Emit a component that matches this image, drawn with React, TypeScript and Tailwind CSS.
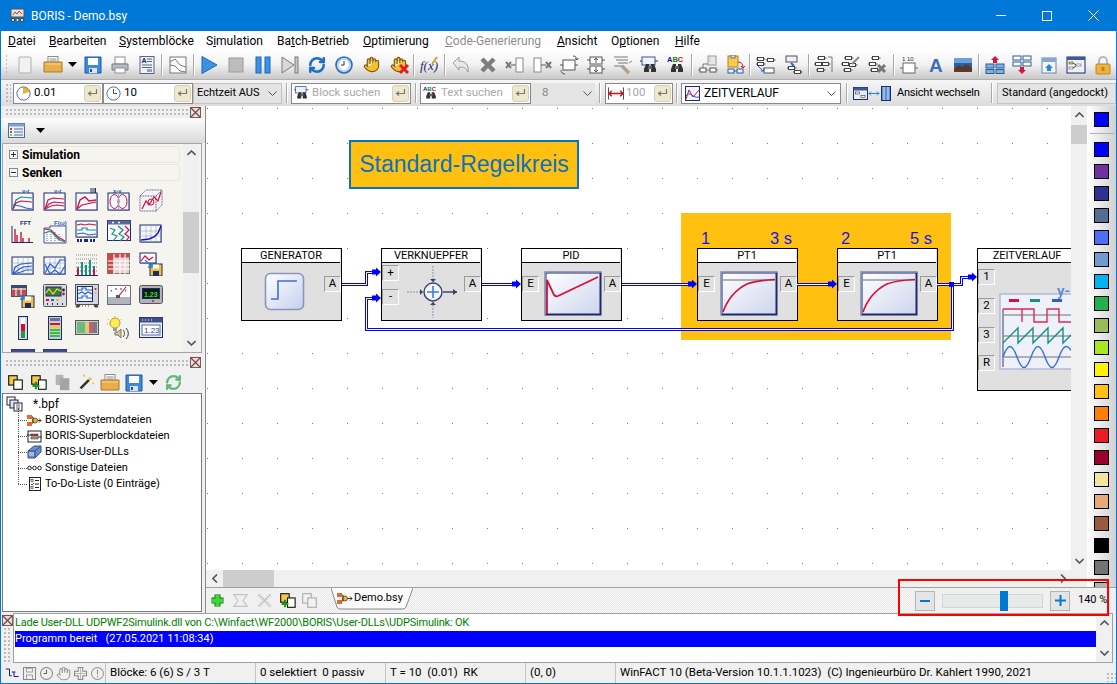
import React from "react";
import { Hand, RefreshCw } from "lucide-react";

const N = "#1c2a6e";
const R = "#d0103a";
const T = "#1a8f86";
const B = "#2a5fd0";

const Ic = ({ s = 20, children }: { s?: number; children: React.ReactNode }) => (
  <svg width={s} height={s} viewBox="0 0 20 20" className="shrink-0">
    {children}
  </svg>
);

const Btn = ({ w = "w-[27px]", children }: { w?: string; children?: React.ReactNode }) => (
  <div className={`${w} h-full flex items-center justify-center shrink-0`}>{children}</div>
);

const Sep = () => (
  <div className="w-[4.2px] h-full flex items-center justify-center shrink-0">
    <div className="w-[2px] h-[22px] shrink-0 border-l border-[#a9a9a9] border-r-white border-r" />
  </div>
);

const Drop = () => (
  <svg width="9" height="5" viewBox="0 0 9 5" className="shrink-0">
    <path d="M0 0h9L4.5 5z" fill="#000" />
  </svg>
);

const Folder = () => (
  <Ic>
    <rect x="5" y="1.5" width="10" height="7" fill="#fff" stroke="#8a8a8a" />
    <path d="M6.5 4h7M6.5 6h7" stroke="#8a8a8a" />
    <path d="M1 7h18v10H1z" fill="#e7ae4c" stroke="#a9782a" />
    <path d="M2 9h16" stroke="#f6d693" />
  </Ic>
);

const Floppy = () => (
  <Ic>
    <path d="M2 2h16v16H2z" fill="#3f88dc" stroke="#1d55a6" />
    <rect x="5" y="3" width="10" height="7" fill="#fff" />
    <rect x="6" y="13" width="8" height="5" fill="#d8e4f4" />
    <rect x="7" y="14" width="2" height="3" fill="#1d55a6" />
  </Ic>
);

const Printer = () => (
  <Ic>
    <rect x="5" y="2" width="10" height="7" fill="#fff" stroke="#8b8f96" />
    <path d="M2 9h16v6H2z" fill="#b9bcc2" stroke="#777b83" />
    <rect x="5" y="13" width="10" height="5" fill="#fff" stroke="#8b8f96" />
  </Ic>
);

const Binoc = ({ abc, s = 20 }: { abc?: boolean; s?: number }) => (
  <Ic s={s}>
    {abc ? (
      <text x="0" y="7" fontSize="7.5" fontWeight="700" fontFamily="Liberation Sans">
        <tspan fill="#1010c0">A</tspan>
        <tspan fill="#118811">B</tspan>
        <tspan fill="#c01010">C</tspan>
      </text>
    ) : (
      <>
        <rect x="2" y="2" width="13" height="8" fill="#eef3fa" stroke="#3a5a9a" />
        <path d="M0 6h2M15 6h3" stroke="#333" />
      </>
    )}
    <path d="M6 9h3v8H4v-3zM11 9h3l2 5v3h-5z" fill="#333" />
    <rect x="8" y="11" width="4" height="3" fill="#666" />
  </Ic>
);

const Blockset = ({ x = 0, y = 0, c = "#fff" }: { x?: number; y?: number; c?: string }) => (
  <g transform={`translate(${x} ${y})`}>
    <rect x="1.5" y="0.5" width="6" height="3" fill={c} stroke="#444" />
    <path d="M0 2h1.5M7.5 2h2" stroke="#444" />
  </g>
);

const Enter = () => (
  <div className="w-[17px] h-[17px] rounded-[3px] bg-[#efe8d0] border border-[#d8d0b4] flex items-center justify-center shrink-0">
    <svg width="11" height="9" viewBox="0 0 11 9">
      <path d="M9.5 0v4.5H2M4 2.5 1.5 4.5 4 6.5" fill="none" stroke="#7a7a6a" strokeWidth="1.2" />
    </svg>
  </div>
);

const Chev = () => (
  <svg width="9" height="5" viewBox="0 0 9 5" className="shrink-0">
    <path d="M.5.5l4 4 4-4" fill="none" stroke="#555" />
  </svg>
);

const Clock = ({ pie }: { pie?: boolean }) => (
  <svg width="15" height="15" viewBox="0 0 17 17" className="shrink-0">
    <circle cx="8.5" cy="8.5" r="7.5" fill="#fff" stroke="#3d5a98" />
    {pie ? (
      <path d="M8.5 8.5V1.5a7 7 0 0 1 6.5 4.5z" fill="#f5b816" stroke="#a9780a" strokeWidth=".5" />
    ) : (
      <path d="M8.5 3.5v5h4" fill="none" stroke="#3a3a3a" />
    )}
  </svg>
);

const Vsep = ({ w }: { w: string }) => (
  <div className={`${w} h-full flex items-center justify-center shrink-0`}>
    <div className="w-[2px] h-[20px] border-l border-[#a9a9a9] border-r border-r-white" />
  </div>
);

const Grip = ({ className = "" }: { className?: string }) => (
  <div className={`bg-[radial-gradient(circle,#bcbcbc_1px,transparent_1.2px)] bg-[length:4px_4px] ${className}`} />
);

const CloseBox = () => (
  <svg width="11" height="11" viewBox="0 0 11 11" className="shrink-0">
    <rect x=".5" y=".5" width="10" height="10" fill="#eadfdb" stroke="#7a5a5a" />
    <path d="M1 1l9 9M10 1l-9 9" stroke="#6a4a4a" strokeWidth="1.2" />
    <path d="M.5.5h10" stroke="#b33" />
  </svg>
);

const TitleBar = () => (
  <div className="h-[31px] bg-[#0078d7] flex items-center shrink-0">
    <svg width="15" height="15" viewBox="0 0 15 15" className="ml-[9px]">
      <rect x="1" y="1" width="13" height="8" fill="#e8e4d8" stroke="#555" />
      <path d="M3 7l2-3 2 2 2-3 3 3" fill="none" stroke="#c0392b" />
      <circle cx="3" cy="12" r="1.6" fill="#eee" stroke="#444" />
      <circle cx="7.5" cy="12" r="1.6" fill="#eee" stroke="#444" />
      <circle cx="12" cy="12" r="1.6" fill="#eee" stroke="#444" />
    </svg>
    <span className="ml-[6px] text-white text-[12px]">BORIS - Demo.bsy</span>
    <div className="ml-auto flex h-full">
      <div className="w-[46px] flex items-center justify-center">
        <div className="w-[10px] h-px bg-white" />
      </div>
      <div className="w-[46px] flex items-center justify-center">
        <div className="w-[10px] h-[10px] border border-white" />
      </div>
      <div className="w-[46px] flex items-center justify-center">
        <svg width="11" height="11" viewBox="0 0 11 11">
          <path d="M.5.5l10 10M10.5.5l-10 10" stroke="#fff" />
        </svg>
      </div>
    </div>
  </div>
);

const MenuBar = () => {
  const items: [string, string, string, string, boolean?][] = [
    ["", "D", "atei", "w-[41px]"],
    ["", "B", "earbeiten", "w-[70px]"],
    ["", "S", "ystemblöcke", "w-[87px]"],
    ["S", "i", "mulation", "w-[71px]"],
    ["Ba", "t", "ch-Betrieb", "w-[86px]"],
    ["", "O", "ptimierung", "w-[82px]"],
    ["", "C", "ode-Generierung", "w-[112px]", true],
    ["", "A", "nsicht", "w-[54px]"],
    ["O", "p", "tionen", "w-[64px]"],
    ["", "H", "ilfe", "w-[40px]"],
  ];
  return (
    <div className="h-[19px] bg-white flex items-center pl-[7px] text-[12px] shrink-0">
      {items.map(([a, u, b, w, off]) => (
        <div key={u + b} className={`${w} ${off ? "text-[#8c8c8c]" : "text-black"} whitespace-nowrap`}>
          {a}
          <u>{u}</u>
          {b}
        </div>
      ))}
    </div>
  );
};

const Toolbar1 = () => (
  <div className="h-[30px] bg-gradient-to-b from-[#fefefe] via-[#f2f2f2] to-[#c9c9c9] flex items-center pl-[4px] shrink-0 border-b border-[#b0b0b0]">
    <Grip className="w-[6px] h-[22px] mr-[4px]" />
    <Btn w="w-[28px]">
      <Ic>
        <rect x="4" y="2" width="12" height="16" rx="1" fill="#f2f2f2" stroke="#b0b0b0" />
      </Ic>
    </Btn>
    <Btn><Folder /></Btn>
    <Btn w="w-[13px]"><Drop /></Btn>
    <Btn><Floppy /></Btn>
    <Btn><Printer /></Btn>
    <Btn>
      <Ic>
        <rect x="3" y="1.5" width="14" height="17" fill="#eef1f6" stroke="#5a6678" />
        <text x="4.5" y="8" fontSize="7" fontWeight="700" fontFamily="Liberation Sans" fill={N}>A</text>
        <path d="M10 4h5M10 6.5h5M5 10h10M5 12.5h10" stroke="#5a6678" />
        <rect x="10" y="14" width="5" height="3" fill="#8aa0c0" />
      </Ic>
    </Btn>
    <Sep />
    <Btn>
      <Ic>
        <rect x="2" y="2" width="16" height="16" fill="#fbfbfb" stroke="#7a7a7a" />
        <path d="M2 7l5-3 5 6 6 2M2 10l5 1 5 5 6 1" fill="none" stroke="#7a7a7a" />
      </Ic>
    </Btn>
    <Sep />
    <Btn>
      <Ic><path d="M3 1.5 18 10 3 18.5z" fill="#3d91e4" stroke="#1b66b8" /></Ic>
    </Btn>
    <Btn>
      <Ic><rect x="3" y="3" width="14" height="14" fill="#bdbdbd" stroke="#9a9a9a" /></Ic>
    </Btn>
    <Btn>
      <Ic>
        <rect x="3" y="2" width="5" height="16" fill="#3d91e4" stroke="#1b66b8" />
        <rect x="12" y="2" width="5" height="16" fill="#3d91e4" stroke="#1b66b8" />
      </Ic>
    </Btn>
    <Btn>
      <Ic>
        <path d="M2 2 14 10 2 18z" fill="#d8d8d8" stroke="#7a7a7a" />
        <rect x="15" y="2" width="3" height="16" fill="#c8c8c8" stroke="#7a7a7a" />
      </Ic>
    </Btn>
    <Btn><RefreshCw size={18} strokeWidth={3.4} color="#1d6fc9" /></Btn>
    <Btn>
      <Ic>
        <circle cx="10" cy="10" r="8" fill="#bcd6f2" stroke="#2c6db5" strokeWidth="1.6" />
        <circle cx="10" cy="10" r="5" fill="#fff" />
        <path d="M10 6v4H7" fill="none" stroke="#333" />
      </Ic>
    </Btn>
    <Btn><Hand size={17} fill="#f5c02a" color="#7a5a10" strokeWidth={1.6} /></Btn>
    <Btn>
      <div className="relative">
        <Hand size={17} fill="#f5c02a" color="#7a5a10" strokeWidth={1.6} />
        <svg width="12" height="12" viewBox="0 0 12 12" className="absolute right-[-3px] bottom-[-2px]">
          <path d="M2 2l8 8M10 2l-8 8" stroke="#e31b1b" strokeWidth="3" />
        </svg>
      </div>
    </Btn>
    <Sep />
    <Btn>
      <Ic>
        <text x="1" y="15" fontSize="13" fontStyle="italic" fontFamily="Liberation Serif" fill={N}>f(x)</text>
        <path d="M13 9l5-7" stroke="#c9a227" strokeWidth="2" />
      </Ic>
    </Btn>
    <Sep />
    <Btn>
      <Ic>
        <path d="M2 8l6-6v4c6 0 10 3 9 11-2-4-4-5-9-5v3z" fill="#e8e8e8" stroke="#9a9a9a" />
      </Ic>
    </Btn>
    <Btn>
      <Ic><path d="M4 4l12 12M16 4 4 16" stroke="#7d7d7d" strokeWidth="4.4" /></Ic>
    </Btn>
    <Btn>
      <Ic>
        <path d="M1 7l5 6M6 7l-5 6" stroke="#777" strokeWidth="2" />
        <path d="M6 10h5" stroke="#555" />
        <rect x="11" y="3" width="7" height="14" fill="#fff" stroke="#888" />
      </Ic>
    </Btn>
    <Btn>
      <Ic>
        <rect x="2" y="3" width="7" height="14" fill="#fff" stroke="#888" />
        <path d="M9 10h5" stroke="#555" />
        <path d="M14 7l5 6M19 7l-5 6" stroke="#777" strokeWidth="2" />
      </Ic>
    </Btn>
    <Btn>
      <Ic>
        <rect x="4" y="5" width="12" height="10" fill="#fff" stroke="#555" />
        <path d="M14 1c3 0 4 2 4 4M6 19c-3 0-4-2-4-4M1 10h3M16 10h3" fill="none" stroke="#555" />
        <path d="M18 5l-2-2M18 5l1.500-2" stroke="#555" />
      </Ic>
    </Btn>
    <Btn>
      <Ic>
        <rect x="4" y="2" width="12" height="7" fill="#fff" stroke="#555" />
        <rect x="4" y="11" width="12" height="7" fill="#fff" stroke="#555" />
        <path d="M10 3v5M8 5l2-2 2 2M10 12v5M8 15l2 2 2-2M1 5h3M16 5h3M1 14h3M16 14h3" fill="none" stroke="#555" />
      </Ic>
    </Btn>
    <Btn>
      <Ic>
        <path d="M1 2h14M3 5h12M5 8h10M1 11h9" stroke="#777" />
        <path d="M9 11l7 7" stroke="#b0a08a" strokeWidth="3.4" />
        <path d="M16 8l3-2" stroke="#888" />
      </Ic>
    </Btn>
    <Btn><Binoc /></Btn>
    <Btn><Binoc abc /></Btn>
    <Sep />
    <Btn>
      <Ic>
        <rect x="10" y="1" width="8" height="9" fill="#e8e8e8" stroke="#999" />
        <path d="M9 4l3-2v5" fill="none" stroke="#c8c8c8" />
        <rect x="2" y="13" width="6" height="4" fill="#fff" stroke="#555" />
        <rect x="12" y="13" width="6" height="4" fill="#fff" stroke="#555" />
        <path d="M0 15h2M8 15h4M18 15h2M5 13V9h5" fill="none" stroke="#777" />
      </Ic>
    </Btn>
    <Btn>
      <Ic>
        <rect x="3" y="1" width="10" height="11" fill="#f5cc4f" stroke="#a9842a" />
        <rect x="6" y="0" width="4" height="3" fill="#ddd" stroke="#777" />
        <path d="M13 7c3 0 5 2 5 5M16 11l2 2 2-2" fill="none" stroke="#c8102e" />
        <rect x="3" y="14" width="6" height="4" fill="#eaf2fb" stroke="#2c5c9a" />
        <rect x="12" y="14" width="6" height="4" fill="#eaf2fb" stroke="#2c5c9a" />
        <path d="M9 16h3" stroke="#2c5c9a" />
      </Ic>
    </Btn>
    <Sep />
    <Btn>
      <Ic>
        <Blockset x={0} y={2} />
        <Blockset x={0} y={7} />
        <Blockset x={10} y={3} />
        <rect x="8" y="13" width="10" height="5" fill="#fff" stroke="#555" />
        <path d="M2 11l6 6M5 16h3v-3" fill="none" stroke="#2a66c8" />
      </Ic>
    </Btn>
    <Btn>
      <Ic>
        <rect x="3" y="1" width="11" height="6" fill="#eef1f6" stroke="#555" />
        <path d="M8 8l3 3" stroke="#2a66c8" strokeWidth="2" />
        <Blockset x={4} y={11} />
        <Blockset x={10} y={15} />
      </Ic>
    </Btn>
    <Sep />
    <Btn>
      <Ic>
        <Blockset x={3} y={1} />
        <Blockset x={0} y={7} />
        <Blockset x={7} y={7} />
        <Blockset x={2} y={13} />
        <path d="M14 2h4v15" fill="none" stroke="#777" />
      </Ic>
    </Btn>
    <Btn>
      <Ic>
        <Blockset x={3} y={1} />
        <Blockset x={0} y={7} />
        <Blockset x={7} y={8} />
        <Blockset x={2} y={13} />
        <path d="M11 9l7-7" stroke="#8a8a8a" strokeWidth="2" />
      </Ic>
    </Btn>
    <Btn>
      <Ic>
        <Blockset x={3} y={1} />
        <Blockset x={0} y={7} />
        <Blockset x={2} y={13} />
        <path d="M10 10l7 7M17 10l-7 7" stroke="#777" strokeWidth="3" />
      </Ic>
    </Btn>
    <Sep />
    <Btn>
      <Ic>
        <text x="3" y="6" fontSize="6" fontFamily="Liberation Sans" fill="#333">1 10</text>
        <rect x="4" y="8" width="12" height="10" fill="#fff" stroke="#666" />
        <path d="M1 13h3M16 13h3" stroke="#666" />
      </Ic>
    </Btn>
    <Btn>
      <Ic><text x="3" y="17" fontSize="19" fontWeight="700" fontFamily="Liberation Sans" fill="#3c6fb5">A</text></Ic>
    </Btn>
    <Btn>
      <Ic>
        <rect x="1" y="3" width="18" height="14" fill="#2a5ea8" />
        <rect x="1" y="3" width="18" height="5" fill="#6aa0da" />
        <path d="M1 14l5-4 3 2 4-3 6 4v4H1z" fill="#5a3a26" />
      </Ic>
    </Btn>
    <Sep />
    <Btn>
      <Ic>
        <rect x="1" y="9" width="8" height="4" fill="#7fb0e0" stroke="#2c5c9a" />
        <rect x="11" y="9" width="8" height="4" fill="#7fb0e0" stroke="#2c5c9a" />
        <rect x="1" y="14.500" width="8" height="4" fill="#7fb0e0" stroke="#2c5c9a" />
        <rect x="11" y="14.500" width="8" height="4" fill="#7fb0e0" stroke="#2c5c9a" />
        <path d="M10 1l4 4h-2v3H8V5H6z" fill="#d8173a" />
      </Ic>
    </Btn>
    <Btn>
      <Ic>
        <rect x="1" y="1" width="8" height="4" fill="#fff" stroke="#2c5c9a" />
        <rect x="11" y="1" width="8" height="4" fill="#fff" stroke="#2c5c9a" />
        <rect x="1" y="7" width="8" height="4" fill="#fff" stroke="#2c5c9a" />
        <rect x="11" y="7" width="8" height="4" fill="#fff" stroke="#2c5c9a" />
        <path d="M10 19l4-4h-2v-3H8v3H6z" fill="#d8173a" />
      </Ic>
    </Btn>
    <Btn>
      <Ic>
        <rect x="3" y="3" width="14" height="15" fill="#f4f7fb" stroke="#6a86aa" />
        <rect x="3" y="3" width="14" height="4" fill="#8aa6cc" />
        <path d="M10 9l4 4h-2v3H8v-3H6z" fill="#2a86d8" />
      </Ic>
    </Btn>
    <Btn>
      <Ic>
        <rect x="1" y="2" width="18" height="16" fill="#eef1f6" stroke={N} />
        <rect x="1" y="2" width="18" height="3" fill="#3d5a98" />
        <g transform="translate(3 7)"><rect width="4" height="2" fill="#f5c02a" stroke="#444" strokeWidth=".5" /></g>
        <g transform="translate(3 12)"><rect width="4" height="2" fill="#fff" stroke="#444" strokeWidth=".5" /></g>
        <g transform="translate(10 9)"><rect width="5" height="2" fill="#fff" stroke="#444" strokeWidth=".5" /></g>
        <path d="M7 8l3 2M7 13l3-2" stroke="#444" />
      </Ic>
    </Btn>
    <Btn>
      <Ic>
        <path d="M6 9V6a4 4 0 0 1 8 0v3" fill="none" stroke="#b8b8b8" strokeWidth="2" />
        <rect x="3" y="9" width="14" height="10" rx="1" fill="#eeb43a" stroke="#b9862a" />
        <rect x="8.500" y="12" width="3" height="4" fill="#b9862a" />
      </Ic>
    </Btn>
  </div>
);

const Field = ({ w, icon, text, dim }: { w: string; icon: React.ReactNode; text: string; dim?: boolean }) => (
  <div className={`${w} h-[21px] bg-white border border-[#8a8a8a] flex items-center pl-[2px] pr-[1px] shrink-0`}>
    <div className="w-[15px] flex items-center shrink-0">{icon}</div>
    <span className={`ml-[3px] text-[11.5px] flex-1 whitespace-nowrap ${dim ? "text-[#a8a8a8]" : "text-black"}`}>{text}</span>
    <Enter />
  </div>
);

const Toolbar2 = () => (
  <div className="h-[26px] bg-gradient-to-b from-[#f6f6f6] to-[#dcdcdc] flex items-center pl-[4px] shrink-0">
    <Grip className="w-[6px] h-[20px] mr-[2px]" />
    <Field w="w-[90px]" icon={<Clock pie />} text="0.01" />
    <Field w="w-[90px]" icon={<Clock />} text="10" />
    <div className="w-[89px] h-[21px] bg-[#e4e4e4] border border-[#c4c4c4] flex items-center pl-[3px] pr-[4px] text-[11px] shrink-0">
      <span className="flex-1 whitespace-nowrap">Echtzeit AUS</span>
      <Chev />
    </div>
    <Vsep w="w-[9px]" />
    <Field w="w-[120px]" icon={<Binoc s={16} />} text="Block suchen" dim />
    <Vsep w="w-[9px]" />
    <Field w="w-[111px]" icon={<Binoc abc s={16} />} text="Text suchen" dim />
    <div className="w-[64px] h-[21px] bg-[#e4e4e4] flex items-center pl-[11px] pr-[3px] text-[11.5px] text-[#888] shrink-0">
      <span className="flex-1">8</span>
      <Chev />
    </div>
    <Vsep w="w-[10px]" />
    <Field
      w="w-[68px]"
      icon={
        <svg width="16" height="13" viewBox="0 0 17 13" className="shrink-0">
          <path d="M.5 0v13M16.500 0v13" stroke="#444" />
          <path d="M1 6.500h15M4 3.500l-3 3 3 3M13 3.500l3 3-3 3" fill="none" stroke="#d0101a" strokeWidth="1.4" />
        </svg>
      }
      text="100"
      dim
    />
    <Vsep w="w-[8px]" />
    <div className="w-[160px] h-[21px] bg-white border border-[#8a8a8a] flex items-center pl-[3px] pr-[4px] text-[12px] shrink-0">
      <svg width="15" height="15" viewBox="0 0 15 15" className="shrink-0">
        <rect x=".5" y=".5" width="14" height="14" fill="#f2f4fb" stroke={N} />
        <path d="M1 13l3-9 4 7 6-7" fill="none" stroke={R} />
        <path d="M1 10c4-6 7 3 13 1" fill="none" stroke={B} />
      </svg>
      <span className="ml-[4px] flex-1">ZEITVERLAUF</span>
      <Chev />
    </div>
    <Vsep w="w-[12px]" />
    <svg width="38" height="15" viewBox="0 0 38 15" className="shrink-0">
      <rect x=".5" y="1.500" width="14" height="12" fill="#e8eef8" stroke={N} />
      <rect x=".5" y="1.500" width="14" height="3" fill="#3d5a98" />
      <rect x="2.500" y="6" width="4" height="2" fill="#fff" stroke="#333" strokeWidth=".6" />
      <rect x="8" y="9.500" width="4" height="2" fill="#fff" stroke="#333" strokeWidth=".6" />
      <path d="M16 7.500h10M18 5.500l-2 2 2 2M24 5.500l2 2-2 2" fill="none" stroke="#2a80e0" />
      <rect x="28.500" y=".5" width="9" height="14" fill="#5a8fd0" stroke={N} />
      <path d="M31 1v13M35 1v13" stroke="#dbe8f8" />
    </svg>
    <span className="ml-[6px] w-[94px] text-[11px] tracking-[-0.2px] whitespace-nowrap shrink-0">Ansicht wechseln</span>
    <div className="w-[2px] h-[20px] border-l border-[#a9a9a9] border-r border-r-white shrink-0" />
    <div className="ml-[4px] flex-1 h-[21px] bg-[#e4e4e4] border border-[#c4c4c4] flex items-center pl-[4px] text-[11px] whitespace-nowrap overflow-hidden">
      Standard (angedockt)
    </div>
  </div>
);

const Fr = ({ x = 1, y = 5, w = 21, h = 17, fill = "#f7f8fe" }: { x?: number; y?: number; w?: number; h?: number; fill?: string }) => (
  <>
    <rect x={x + 1} y={y + 1} width={w} height={h} fill="#b8bccb" />
    <rect x={x} y={y} width={w} height={h} fill={fill} stroke={N} />
  </>
);
const Pl = ({ p, c = R, w = 1.2 }: { p: string; c?: string; w?: number }) => <polyline points={p} fill="none" stroke={c} strokeWidth={w} />;
const Tx = ({ x, y, t, c = B, s = 6 }: { x: number; y: number; t: string; c?: string; s?: number }) => (
  <text x={x} y={y} fontSize={s} fontWeight="700" fontFamily="Liberation Sans" fill={c}>{t}</text>
);
const GridLines = () => <path d="M2 11h20M2 16h20M7 5v17M12 5v17M17 5v17" stroke="#9aa4b4" strokeWidth=".6" />;
const Disk = () => (
  <g>
    <rect x="11" y="12" width="12" height="12" fill="#f2c23c" stroke={N} />
    <rect x="14" y="12.500" width="6" height="4" fill="#fff" />
    <rect x="14" y="19" width="6" height="5" fill={N} />
    <path d="M6 8l7 7M13 11v4H9" fill="none" stroke="#2a80d0" strokeWidth="1.4" />
  </g>
);

const sinks: React.ReactNode[] = [
  <><Tx x={11} y={5} t="y-t" /><Fr /><Pl p="2,21 5,12 10,9 21,10" c={T} /><Pl p="2,21 5,15 10,13 21,14" /><Pl p="2,17 9,18 15,20 21,21" c={B} /></>,
  <><Tx x={11} y={5} t="y-t" /><Fr /><Pl p="2,21 5,12 10,10 21,11" /><Pl p="2,21 6,16 11,14 21,15" /><Pl p="2,21 8,18 14,17 21,18" /></>,
  <><rect x="15" y="0" width="5" height="5" fill="#8895b0" /><path d="M20.500 0v5" stroke="#333" /><Fr /><Pl p="2,21 5,12 10,9 14,13 21,12" w={1.4} /><Pl p="2,21 7,17 21,14" /></>,
  <><Tx x={6} y={5} t="x-y" /><Fr /><ellipse cx="7.500" cy="13.500" rx="4.500" ry="7" fill="none" stroke={R} /><ellipse cx="15.500" cy="13.500" rx="4.500" ry="7" fill="none" stroke={R} /><path d="M11.500 5v17" stroke="#9aa4b4" /></>,
  <><path d="M1 8l6-6h16v15l-6 6H1zM1 8h16v15M17 8l6-6" fill="#f4f4f8" stroke="#5a6278" strokeDasharray="1 .6" /><Pl p="3,21 7,13 10,17 15,9 19,13 22,4" /><circle cx="12" cy="14" r="3" fill="none" stroke={R} /></>,
  <><Tx x={9} y={5} t="FFT" c={N} /><path d="M1 6v17M1 22.500h21" stroke={N} /><path d="M4 22V9M6 22V15M10 22V12M12 22V18M18 22V18" stroke={R} strokeWidth="1.400" /></>,
  <><Tx x={11} y={5} t="F(ω)" /><path d="M1 8h6v-2h16v17H1z" fill="#f7f8fe" stroke={N} strokeWidth=".8" /><path d="M4 12v10M8 12v10M12 12v10M16 14v8" stroke="#777" strokeDasharray="1 1" /><Pl p="1,9 8,10 15,17 22,21" /><Pl p="1,13 8,11 15,19 22,22" c={T} /></>,
  <><Fr y={1} h={16} /><Pl p="2,5 6,4 10,5 14,4 21,5" /><Pl p="2,10 7,10 7,8 12,8 12,10 21,10" c={T} /><Pl p="2,14 8,13 14,15 21,14" c={B} /><path d="M2 19h2v3H2zM5 19h2v3H5zM9 19h4v3H9zM15 19h2v3h-2zM18 19h2v3h-2z" fill={N} /></>,
  <><rect x=".5" y=".5" width="23" height="20" fill="#f7f8fe" stroke={N} /><rect x=".5" y=".5" width="23" height="4" fill="#5a6a98" /><circle cx="6" cy="2.500" r="1" fill="#fff" /><circle cx="12" cy="2.500" r="1" fill="#ffd" /><Pl p="3,8 8,10 5,14 10,16 6,21" c={T} /><Pl p="11,6 16,10 12,14 17,17 13,21" c={T} /><Pl p="18,6 22,10 18,14 22,17 19,21" /></>,
  <><Fr /><GridLines /><Pl p="2,20 10,19 15,17 19,13 22,6" c="#1010c0" w={1.4} /></>,
  <><Fr /><GridLines /><Pl p="2,22 4,15 10,12 21,11" c={B} /><Pl p="2,22 7,18 12,15 21,14" c={B} /><Pl p="2,22 10,20 15,18 21,18" c={B} /></>,
  <><Fr /><GridLines /><Pl p="2,21 7,12 12,16 17,8 22,8" c={B} /><Pl p="2,12 7,22 12,18 17,22 22,14" c={B} /></>,
  <><path d="M1 3h21M1 7h21M1 11h21M1 15h21M1 19h21" stroke="#8a8a8a" strokeDasharray="1 1" /><path d="M3 23V15M7 23V10M11 23V13M15 23V8M19 23V14" stroke={T} strokeWidth="2" /><path d="M3 23V17M19 23V17" stroke={R} strokeWidth="2" /><path d="M0 23.500h23" stroke={N} /></>,
  <><rect x=".5" y="1.500" width="22" height="20" fill="#ead2d2" stroke="#777" /><rect x=".5" y="1.500" width="22" height="4" fill="#c84a4a" /><rect x=".5" y="1.500" width="6" height="20" fill="#c84a4a" /><path d="M1 9h22M1 13h22M1 17h22M7 2v20M13 2v20M18 2v20" stroke="#fff" /></>,
  <><Fr x={1} y={1} w={16} h={10} /><Pl p="2,9 6,4 10,8 14,5" /><Disk /></>,
  <><rect x=".5" y="1.500" width="15" height="11" fill="#c84a4a" stroke="#555" /><path d="M1 5h14M5 2v10M10 2v10" stroke="#fff" /><rect x="0" y="1" width="16" height="3" fill="#3a4878" /><Disk /></>,
  <><rect x=".5" y=".5" width="23" height="22" rx="1" fill="#d8dbe3" stroke="#555" /><rect x="3" y="3" width="15" height="9" fill="#3f7a3a" stroke={N} /><Pl p="3,9 6,5 10,10 14,5 18,7" c="#f2e23c" /><circle cx="20.500" cy="6" r="1.400" fill="#222" /><circle cx="20.500" cy="10" r="1.400" fill={R} /><path d="M3 16h3" stroke={R} strokeWidth="2" /><path d="M8 16h3" stroke={B} strokeWidth="2" /><path d="M13 16h3" stroke="#e8c030" strokeWidth="2" /><path d="M4 20h1M9 20h1M14 20h1M19 20h1" stroke="#333" strokeWidth="2" /></>,
  <><rect x=".5" y=".5" width="23" height="20" fill="#d3d6de" stroke="#555" /><rect x="2.500" y="2.500" width="15" height="15" fill="#f2f5ff" stroke={N} /><Pl p="3,6 7,6 7,4 11,4 11,6 17,6" c={B} /><Pl p="3,10 7,8 10,10 13,8 17,10" c={B} /><Pl p="3,14 7,14 7,12 12,12 12,14 17,14" c={B} /><circle cx="20.500" cy="5" r="1" fill={R} /><circle cx="20.500" cy="9" r="1" fill="#e8c030" /><path d="M2 21l-1 2h3l1-2zM19 21l1 2h3l-1-2zM7 22h1M10 22h1M13 22h1" fill="#444" stroke="#444" /></>,
  <><rect x=".5" y="1.500" width="23" height="19" fill="#fff" stroke="#6a6f7c" /><rect x="1" y="13" width="22" height="7" fill="#b2b5bd" /><path d="M4 6l.7 1.500M9 4v2M14 4v2M19 6l-.7 1.500" stroke="#333" /><path d="M11 13l8-10" stroke={R} strokeWidth="1.200" /><rect x="9" y="11" width="4" height="3" fill="#555" /></>,
  <><rect x=".5" y="1.500" width="23" height="18" rx="2" fill="#b0b3bc" stroke="#555" /><rect x="3.500" y="4.500" width="17" height="10" fill="#101a10" stroke={N} /><text x="5" y="12.500" fontSize="7" fontWeight="700" fontFamily="Liberation Sans" fill="#28e040">1.23</text><circle cx="14" cy="17" r="1" fill={R} /><circle cx="18" cy="17" r="1" fill="#e8c030" /></>,
  <><rect x="7.500" y=".5" width="9" height="23" fill="#d5d7dd" stroke={N} /><rect x="10" y="2" width="4" height="20" fill="#fff" /><rect x="10" y="8" width="4" height="7" fill={R} /><rect x="10" y="15" width="4" height="7" fill="#2a9a40" /></>,
  <><rect x="5.500" y=".5" width="13" height="23" fill="#c8cbd4" stroke={N} /><rect x="7" y="2" width="10" height="3" fill="#6a7488" /><rect x="7" y="7" width="10" height="2" fill={R} /><rect x="7" y="10" width="10" height="2" fill="#e8d030" /><rect x="7" y="13" width="10" height="2" fill="#3ac040" /><rect x="7" y="16" width="10" height="2" fill="#3ac040" /><rect x="7" y="19" width="10" height="2" fill="#3ac040" /></>,
  <><rect x=".5" y="4.500" width="23" height="14" fill="#c8cbd4" stroke="#555" /><path d="M3 6v11M5 6v11M7 6v11M9 6v11" stroke="#30b040" strokeWidth="1.200" /><path d="M11 6v11M13 6v11" stroke="#e8d030" strokeWidth="1.200" /><path d="M15 6v11M17 6v11" stroke={R} strokeWidth="1.200" /><path d="M19 6v11M21 6v11" stroke="#444" strokeWidth="1.200" /></>,
  <><circle cx="8" cy="7" r="5" fill="#f8ec5a" stroke="#c89a10" /><path d="M8 0v1M1 3l1 1M15 3l-1 1M0 8h1" stroke="#e0a010" strokeDasharray="1 .5" /><rect x="6" y="12" width="4" height="3" fill="#999" /><path d="M8 16h3l3-3v9l-3-3H8z" fill="#d8c880" stroke="#777" /><path d="M16 14c2 2 2 5 0 7M19 12c3 3 3 8 0 11" fill="none" stroke="#333" /></>,
  <><rect x=".5" y="1.500" width="23" height="20" fill="#eef1fa" stroke={N} /><rect x=".5" y="1.500" width="23" height="5" fill="#3f4f88" /><path d="M3 4h1M6 4h1M9 4h1M12 4h1" stroke="#fff" /><rect x="3" y="9" width="18" height="10" fill="#fff" stroke="#5a6a98" /><text x="5" y="17" fontSize="8" fontFamily="Liberation Sans" fill="#2a4a9a">1.23</text></>,
  <><rect x=".5" y="1.500" width="23" height="20" fill="#eef1fa" stroke={N} /><rect x=".5" y="1.500" width="23" height="5" fill="#3f4f88" /></>,
  <><rect x=".5" y="1.500" width="23" height="20" fill="#eef1fa" stroke={N} /><rect x=".5" y="1.500" width="23" height="5" fill="#3f4f88" /></>,
];

const SideHead = ({ open, t }: { open?: boolean; t: string }) => (
  <div className="h-[17px] mb-px mx-[3px] rounded-[3px] border border-[#e9e8e0] flex items-center pl-[2px] font-bold text-[12px] shrink-0">
    <svg width="9" height="9" viewBox="0 0 9 9" className="mr-[4px]">
      <rect x=".5" y=".5" width="8" height="8" fill="#f6f6f2" stroke="#7d8a9a" />
      <path d={open ? "M2 4.500h5" : "M2 4.500h5M4.500 2v5"} stroke="#333" />
    </svg>
    {t}
  </div>
);

const ScrollV = ({ thumb }: { thumb?: string }) => (
  <div className="w-[16px] bg-[#f0f0f0] flex flex-col items-center shrink-0">
    <svg width="9" height="6" viewBox="0 0 9 6" className="mt-[6px]"><path d="M.5 5 4.500 1l4 4" fill="none" stroke="#555" strokeWidth="1.600" /></svg>
    {thumb && <div className={thumb} />}
    <svg width="9" height="6" viewBox="0 0 9 6" className="mt-auto mb-[6px]"><path d="M.5 1l4 4 4-4" fill="none" stroke="#555" strokeWidth="1.600" /></svg>
  </div>
);

const treeIcons: React.ReactNode[] = [
  <svg key="a" width="15" height="13" viewBox="0 0 15 13"><rect x="0" y="1" width="5" height="4" fill="#e36a2c" /><rect x="0" y="8" width="5" height="4" fill="#e36a2c" /><circle cx="8" cy="6.500" r="2.500" fill="#f2b33c" stroke="#8a5a10" /><path d="M5 3h1v6H5M10.500 6.500H14M12 4.500l2 2-2 2" fill="none" stroke="#333" /></svg>,
  <svg key="b" width="15" height="13" viewBox="0 0 15 13"><rect x="1" y="1" width="13" height="11" fill="none" stroke="#222" /><rect x="4" y="4" width="7" height="2" fill="#d33" stroke="#222" strokeWidth=".5" /><rect x="4" y="7" width="7" height="2" fill="#aaa" stroke="#222" strokeWidth=".5" /><path d="M0 5h4M11 7h4" stroke="#222" /></svg>,
  <svg key="c" width="15" height="14" viewBox="0 0 15 14"><path d="M1 6l6-5h7v6l-6 6H1z" fill="#6d8cc8" stroke="#34508a" /><path d="M1 6h7v7M8 6l6-5" fill="none" stroke="#34508a" /><path d="M2 8h5M2 10h5" stroke="#dfe8f8" /></svg>,
  <svg key="d" width="15" height="6" viewBox="0 0 15 6"><circle cx="2.500" cy="3" r="1.800" fill="#fff" stroke="#222" /><circle cx="7.500" cy="3" r="1.800" fill="#fff" stroke="#222" /><circle cx="12.500" cy="3" r="1.800" fill="#fff" stroke="#222" /></svg>,
  <svg key="e" width="14" height="14" viewBox="0 0 14 14"><rect x="1.500" y=".5" width="11" height="13" fill="#fff" stroke="#222" /><rect x="3" y="2.500" width="2" height="2" fill="#fff" stroke="#222" strokeWidth=".6" /><rect x="3" y="9.500" width="2" height="2" fill="#fff" stroke="#222" strokeWidth=".6" /><path d="M3 7l1 1 2-2" fill="none" stroke="#d22" /><path d="M7 3.500h4M7 7h4M7 10.500h4" stroke="#222" /></svg>,
];

const LeftPanel = () => (
  <div className="w-[204px] flex flex-col shrink-0 bg-[#f0f0f0]">
    <div className="h-[12px] flex items-center pl-[4px] pr-[4px] gap-[2px] shrink-0">
      <Grip className="flex-1 h-[8px]" />
      <CloseBox />
    </div>
    <div className="h-[25px] bg-gradient-to-b from-[#fdfdfd] to-[#dadada] flex items-center pl-[7px] shrink-0">
      <svg width="17" height="15" viewBox="0 0 17 15">
        <rect x=".5" y=".5" width="16" height="14" fill="#eef3fb" stroke="#4a6a9a" />
        <rect x=".5" y=".5" width="16" height="3" fill="#7fa0d0" />
        <rect x="2" y="5" width="2" height="2" fill="#d33" />
        <rect x="2" y="8" width="2" height="2" fill="#2a2" />
        <rect x="2" y="11" width="2" height="2" fill="#e8a020" />
        <path d="M6 6h9M6 9h9M6 12h9" stroke="#4a6a9a" />
      </svg>
      <div className="ml-[11px]"><Drop /></div>
    </div>
    <div className="h-[210px] ml-px mr-[3px] border border-[#a5a5a5] bg-[#f5f4ee] flex overflow-hidden shrink-0">
      <div className="flex-1 flex flex-col pt-[2px] overflow-hidden">
        <SideHead t="Simulation" />
        <SideHead open t="Senken" />
        <div className="grid grid-cols-5 w-[160px] ml-[4px] mt-[2px] auto-rows-[32px] shrink-0">
          {sinks.map((s, i) => (
            <div key={i} className="flex items-center justify-center">
              <svg width="24" height="24" viewBox="0 0 24 24">{s}</svg>
            </div>
          ))}
        </div>
      </div>
      <ScrollV thumb="w-[16px] h-[61px] bg-[#cdcdcd] mt-[56px]" />
      <div className="w-[2px] shrink-0" />
    </div>
    <div className="h-[19px] flex items-center pl-[4px] pr-[4px] gap-[2px] shrink-0">
      <Grip className="flex-1 h-[8px]" />
      <CloseBox />
    </div>
    <div className="h-[21px] bg-[#f0f0f0] flex items-center pl-[2px] shrink-0">
      <div className="w-[24px] flex justify-center">
        <Ic s={17}><rect x="2" y="2" width="10" height="11" fill="#f5c842" stroke="#111" strokeWidth="1.300" /><rect x="8" y="7" width="10" height="11" fill="#fff" stroke="#111" strokeWidth="1.300" /></Ic>
      </div>
      <div className="w-[23px] flex justify-center">
        <Ic s={17}><rect x="2" y="2" width="10" height="10" fill="#f5c842" stroke="#111" strokeWidth="1.300" /><rect x="10" y="7" width="9" height="11" fill="#fff" stroke="#111" strokeWidth="1.300" /><path d="M7 9v9M3 14h8" stroke="#1a9a1a" strokeWidth="2.400" /></Ic>
      </div>
      <div className="w-[24px] flex justify-center">
        <Ic s={17}><rect x="2" y="1" width="9" height="12" fill="#b4b4b4" /><rect x="7" y="5" width="11" height="14" fill="#a4a4a4" /></Ic>
      </div>
      <div className="w-[24px] flex justify-center">
        <Ic s={17}><path d="M3 17 13 7" stroke="#333" strokeWidth="3" /><path d="M14 3l1 2 2 1-2 1-1 2-1-2-2-1 2-1z" fill="#e8c020" /><path d="M6 2h2M18 10v2" stroke="#e8c020" strokeWidth="2" /></Ic>
      </div>
      <div className="w-[24px] flex justify-center"><Folder /></div>
      <div className="w-[24px] flex justify-center"><Floppy /></div>
      <div className="w-[14px] flex justify-center"><Drop /></div>
      <div className="w-[26px] flex justify-center"><RefreshCw size={17} strokeWidth={3.2} color="#5fb878" /></div>
    </div>
    <div className="flex-1 ml-px mr-[3px] mb-px border border-[#7a7a7a] bg-white relative text-[11px] pl-[3px] pt-px">
      <div className="absolute left-[15px] top-[14px] h-[76px] border-l border-dotted border-[#555]" />
      <div className="h-[17px] flex items-center">
        <svg width="18" height="16" viewBox="0 0 18 16">
          <rect x="1" y="1" width="8" height="8" fill="#fff" stroke="#223" />
          <rect x="4" y="4" width="8" height="8" fill="#dce6f6" stroke="#223" />
          <rect x="8" y="7" width="8" height="8" fill="#fff" stroke="#223" />
          <path d="M10 9h4M10 11h4M10 13h4" stroke="#223" strokeWidth=".7" />
        </svg>
        <span className="ml-[9px] text-[12px]">*.bpf</span>
      </div>
      {["BORIS-Systemdateien", "BORIS-Superblockdateien", "BORIS-User-DLLs", "Sonstige Dateien", "To-Do-Liste (0 Einträge)"].map((t, i) => (
        <div key={t} className="h-[16px] flex items-center ml-[12px]">
          <div className="w-[9px] border-t border-dotted border-[#555] shrink-0" />
          <div className="w-[15px] flex justify-center shrink-0">{treeIcons[i]}</div>
          <span className="ml-[3px] whitespace-nowrap">{t}</span>
        </div>
      ))}
    </div>
  </div>
);

const Port = ({ c, t }: { c: string; t: string }) => (
  <div className={`absolute ${c} bg-[#e0e0e0] border-t border-l border-[#9a9a9a] border-r border-b border-r-white border-b-white flex items-center justify-center text-[11.5px] leading-none`}>
    {t}
  </div>
);

const Block = ({ c, t, children }: { c: string; t: string; children: React.ReactNode }) => (
  <div className={`absolute ${c} bg-[#e0e0e0] border border-black overflow-hidden`}>
    <div className="h-[14px] bg-white border-b border-black mr-px flex items-center justify-center text-[11px] leading-none">{t}</div>
    {children}
  </div>
);

const GlossFrame = ({ id, children }: { id: string; children: React.ReactNode }) => (
  <svg width="58" height="45" viewBox="0 0 58 45" className="absolute left-[22px] top-[22px]">
    <defs>
      <linearGradient id={id} x1="0" y1="0" x2="1" y2="1">
        <stop offset="0" stopColor="#ffffff" />
        <stop offset="1" stopColor="#cdd5ee" />
      </linearGradient>
    </defs>
    <rect x="1.500" y="1.500" width="55" height="42" fill={`url(#${id})`} stroke="#1e2768" strokeWidth="2" />
    <path d="M1 1h56M1 1v43" stroke="#9aa8c8" strokeWidth="1.600" fill="none" />
    {children}
  </svg>
);

const Pt1 = ({ c, id }: { c: string; id: string }) => (
  <Block c={c} t="PT1">
    <Port c="left-0 top-[27px] w-[17px] h-[16px]" t="E" />
    <Port c="right-0 top-[27px] w-[17px] h-[16px]" t="A" />
    <GlossFrame id={id}>
      <path d="M2 9h54" stroke="#999" strokeWidth="1.400" />
      <path d="M3 41c5-14 14-23 24-28 8-3 18-4 28-4.500" fill="none" stroke="#d9103a" strokeWidth="1.600" />
    </GlossFrame>
  </Block>
);

const Wire = ({ d }: { d: string }) => (
  <>
    <path d={d} fill="none" stroke="#0000ff" strokeWidth="3" />
    <path d={d} fill="none" stroke="#fff" strokeWidth="1" />
  </>
);

const Arrow = ({ x, y }: { x: number; y: number }) => (
  <path
    d={`M${x - 9} ${y - 2.5}h4v-2l5 4.500-5 4.500v-2h-4z`}
    fill="#0000ff"
  />
);

const Canvas = () => (
  <div className="flex-1 relative bg-white overflow-hidden">
    <svg width="863" height="464" className="absolute left-0 top-0">
      <defs>
        <pattern id="grid" width="35" height="35" patternUnits="userSpaceOnUse">
          <rect x="1" y="2" width="1" height="1" fill="#777" />
        </pattern>
      </defs>
      <rect width="863" height="464" fill="url(#grid)" />
    </svg>
    <div className="absolute left-[143px] top-[34px] w-[230px] h-[49px] bg-[#ffc00f] border-2 border-[#0a72c0] flex items-center justify-center text-[23px] text-[#0a72c0] font-['Liberation_Sans',sans-serif]">
      Standard-Regelkreis
    </div>
    <div className="absolute left-[475px] top-[107px] w-[270px] h-[127px] bg-[#ffc00f] text-[16.5px] text-[#1616e8] font-['Liberation_Sans',sans-serif]">
      <span className="absolute left-[20px] top-[13px]">1</span>
      <span className="absolute left-[89px] top-[13px]">3 s</span>
      <span className="absolute left-[160px] top-[13px]">2</span>
      <span className="absolute left-[229px] top-[13px]">5 s</span>
    </div>

    <Block c="left-[35px] top-[142px] w-[101px] h-[73px]" t="GENERATOR">
      <Port c="right-0 top-[27px] w-[17px] h-[16px]" t="A" />
      <svg width="42" height="40" viewBox="0 0 42 40" className="absolute left-[22px] top-[23px]">
        <defs>
          <linearGradient id="gen" x1="0" y1="0" x2="1" y2="1">
            <stop offset="0" stopColor="#ffffff" />
            <stop offset="1" stopColor="#c5d0ef" />
          </linearGradient>
        </defs>
        <rect x="1.500" y="1.500" width="38" height="36" rx="5" fill="url(#gen)" stroke="#8a95bd" strokeWidth="1.600" />
        <path d="M7 27h7V9h19" fill="none" stroke="#3d6fd8" strokeWidth="1.600" />
      </svg>
    </Block>

    <Block c="left-[175px] top-[142px] w-[101px] h-[73px]" t="VERKNUEPFER">
      <Port c="left-0 top-[16px] w-[17px] h-[16px]" t="+" />
      <Port c="left-0 top-[40px] w-[17px] h-[16px]" t="-" />
      <Port c="right-0 top-[27px] w-[17px] h-[16px]" t="A" />
      <svg width="52" height="52" viewBox="0 0 52 52" className="absolute left-[25px] top-[17px]">
        <path d="M26 0v16M26 36v16M0 26h16" stroke="#8a92ac" strokeDasharray="2 1" />
        <path d="M36 26h14" stroke="#333a5a" strokeWidth="1.400" />
        <path d="M46 23l4 3-4 3zM23 13l3 3 3-3zM23 39l3-3 3 3zM13 23l3 3-3 3z" fill="#3a4260" />
        <circle cx="26" cy="26" r="9" fill="#f2f5fd" stroke="#39426a" strokeWidth="1.400" />
        <path d="M20 26h12M26 20v12" stroke="#3d7ae0" strokeWidth="1.600" />
      </svg>
    </Block>

    <Block c="left-[315px] top-[142px] w-[101px] h-[73px]" t="PID">
      <Port c="left-0 top-[27px] w-[17px] h-[16px]" t="E" />
      <Port c="right-0 top-[27px] w-[17px] h-[16px]" t="A" />
      <GlossFrame id="pid">
        <path d="M3 43V9l7 15c1 1 2 2 4 1L54 6" fill="none" stroke="#d9103a" strokeWidth="1.800" />
      </GlossFrame>
    </Block>

    <Pt1 c="left-[491px] top-[142px] w-[101px] h-[73px]" id="p1" />
    <Pt1 c="left-[631px] top-[142px] w-[101px] h-[73px]" id="p2" />

    <Block c="left-[771px] top-[142px] w-[101px] h-[143px]" t="ZEITVERLAUF">
      <Port c="left-0 top-[20px] w-[17px] h-[16px]" t="1" />
      <Port c="left-0 top-[49px] w-[17px] h-[16px]" t="2" />
      <Port c="left-0 top-[78px] w-[17px] h-[16px]" t="3" />
      <Port c="left-0 top-[106px] w-[17px] h-[16px]" t="R" />
      <svg width="100" height="85" viewBox="0 0 100 85" className="absolute left-[21px] top-[36px]">
        <rect x="1" y="9" width="95" height="75" fill="#eef0fa" stroke="#b5bdd8" strokeWidth="1.600" />
        <rect x="10" y="14" width="10" height="3" fill="#d9103a" />
        <rect x="31" y="14" width="10" height="3" fill="#1a8f86" />
        <rect x="53" y="14" width="10" height="3" fill="#2a5fd0" />
        <path d="M4 24v58" stroke="#6a7088" strokeWidth="1.400" />
        <path d="M4 30h72M4 51h72M4 72h72" stroke="#9a9a9a" strokeWidth="1.400" />
        <path d="M4 24h19v13H23M23 37h0M23 37v-13h12v13h13V24h12v13h14" fill="none" stroke="#dc2b4f" strokeWidth="1.400" />
        <path d="M4 58l15-15v15l15-15v15l15-15v15l15-15v15l12-12" fill="none" stroke="#1a8f86" strokeWidth="1.400" />
        <path d="M4 72c5-14 9-14 14 0s9 14 14 0 9-14 14 0 9 14 14 0 9-14 16 0" fill="none" stroke="#3d6fd8" strokeWidth="1.400" />
      </svg>
      <span className="absolute left-[79px] top-[35px] text-[15px] leading-none text-[#5a8ad8] font-semibold">y-</span>
    </Block>

    <svg width="863" height="464" className="absolute left-0 top-0">
      <Wire d="M136 178.500H160.500V166.500H168" />
      <Arrow x={175} y={166} />
      <Wire d="M276 178.500H308" />
      <Arrow x={315} y={178} />
      <Wire d="M416 178.500H484" />
      <Arrow x={491} y={178} />
      <Wire d="M591 178.500H624" />
      <Arrow x={631} y={178} />
      <Wire d="M731 178.500H755.500V171.500H764" />
      <Arrow x={771} y={171} />
      <Wire d="M746.500 178.500V223.500H160.500V192.500H168" />
      <Arrow x={175} y={192} />
      <rect x="743" y="176" width="5" height="5" fill="#0000ff" />
    </svg>
  </div>
);

const swatches = [
  "bg-[#0000ff]", "bg-[#7030a0]", "bg-[#2e3192]", "bg-[#546e8f]", "bg-[#4f6ef5]", "bg-[#6f9bd1]", "bg-[#00b4f0]",
  "bg-[#22b14c]", "bg-[#9bbb59]", "bg-[#a8e61d]", "bg-[#fff200]", "bg-[#ffc00f]", "bg-[#ff7f00]", "bg-[#ed1c24]",
  "bg-[#990030]", "bg-[#f5e49c]", "bg-[#e5aa7a]", "bg-[#9c5a3c]", "bg-[#000000]", "bg-[#737373]", "bg-[#b3b3b3]",
];

const Palette = () => (
  <div className="w-[29px] bg-gradient-to-r from-[#ffffff] to-[#d0d0d0] flex flex-col items-center overflow-hidden shrink-0 pt-[6px]">
    <div className="w-[15px] h-[15px] bg-[#0000ff] border border-black shrink-0" />
    <div className="w-[24px] h-px bg-[#b0b0b0] mt-[6px] mb-[8px] shrink-0" />
    <div className="flex flex-col gap-[7px] shrink-0">
      {swatches.map((c) => (
        <div key={c} className={`w-[15px] h-[15px] ${c} border border-black`} />
      ))}
    </div>
  </div>
);

const TabRow = () => (
  <div className="h-[26px] border-t border-[#a0a0a0] flex shrink-0 bg-[repeating-conic-gradient(#e6e6e6_0_25%,#fbfbfb_0_50%)] bg-[length:2px_2px]">
    <div className="w-[116px] bg-[#f0f0f0] flex items-center shrink-0">
      <div className="w-[22px] flex justify-center">
        <Ic s={17}><path d="M10 3v14M3 10h14" stroke="#0c6b12" strokeWidth="7" /><path d="M10 3v14M3 10h14" stroke="#46d23c" strokeWidth="5" /></Ic>
      </div>
      <div className="w-[24px] flex justify-center">
        <Ic s={17}><path d="M2 3h16l-5 7 5 7H2l5-7z" fill="none" stroke="#c4c4c4" strokeWidth="1.400" /></Ic>
      </div>
      <div className="w-[24px] flex justify-center">
        <Ic s={17}><path d="M3 3l14 14M17 3 3 17" stroke="#c4c4c4" strokeWidth="3" strokeDasharray="2 1" /></Ic>
      </div>
      <div className="w-[22px] flex justify-center">
        <Ic s={17}><rect x="2" y="2" width="10" height="10" fill="#f5c842" stroke="#111" strokeWidth="1.300" /><rect x="10" y="7" width="9" height="11" fill="#fff" stroke="#111" strokeWidth="1.300" /><path d="M7 9v9M3 14h8" stroke="#1a9a1a" strokeWidth="2.400" /></Ic>
      </div>
      <div className="w-[22px] flex justify-center">
        <Ic s={17}><rect x="2" y="2" width="10" height="11" fill="#f2f2f2" stroke="#aaa" strokeWidth="1.300" /><rect x="8" y="7" width="10" height="11" fill="#f2f2f2" stroke="#aaa" strokeWidth="1.300" /></Ic>
      </div>
    </div>
    <div className="w-[9px] shrink-0" />
    <div className="relative w-[82px] h-[21px] shrink-0 flex items-center">
      <svg width="82" height="22" viewBox="0 0 82 22" className="absolute left-0 top-0">
        <path d="M0 0 6 19q1 2 3 2h63q2 0 3-2L82 0" fill="#fbfbfb" stroke="#888" />
      </svg>
      <svg width="17" height="13" viewBox="0 0 17 13" className="relative ml-[6px] shrink-0">
        <rect x="0" y="1" width="5" height="4" fill="#e36a2c" />
        <rect x="0" y="8" width="5" height="4" fill="#e36a2c" />
        <circle cx="8" cy="6.500" r="2.500" fill="#f2b33c" stroke="#8a5a10" />
        <path d="M5 3h1v6H5M10.500 6.500H15M13 4.500l2 2-2 2" fill="none" stroke="#333" />
      </svg>
      <span className="relative text-[11px]">Demo.bsy</span>
    </div>
    <div className="flex-1" />
    <div className="w-[207px] bg-[#f0f0f0] flex items-center pl-[6px] shrink-0">
      <div className="w-[20px] h-[20px] bg-[#e4e4e4] border border-[#b4b4b4] flex items-center justify-center">
        <div className="w-[10px] h-[2px] bg-[#0078d7]" />
      </div>
      <div className="relative ml-[7px] w-[101px] h-[14px] bg-[#e8eaea] border border-[#d4d6d6]">
        <div className="absolute left-[57px] top-[-4px] w-[8px] h-[20px] bg-[#0078d7]" />
      </div>
      <div className="ml-[7px] w-[20px] h-[20px] bg-[#e4e4e4] border border-[#b4b4b4] flex items-center justify-center">
        <svg width="11" height="11" viewBox="0 0 11 11"><path d="M0 5.500h11M5.500 0v11" stroke="#0078d7" strokeWidth="2" /></svg>
      </div>
      <span className="ml-[8px] text-[11px] whitespace-nowrap">140 %</span>
    </div>
  </div>
);

const Messages = () => (
  <div className="h-[50px] flex bg-[#f0f0f0] shrink-0">
    <div className="w-[12px] flex flex-col items-center pt-[2px] shrink-0">
      <CloseBox />
      <Grip className="w-[8px] flex-1 mt-px" />
    </div>
    <div className="flex-1 bg-white border border-[#a0a0a0] flex pl-[1px]">
      <div className="flex-1 flex flex-col text-[11px] leading-[16px] pt-[1px]">
        <div className="text-[#008000] h-[16px] whitespace-nowrap tracking-[-0.2px]">Lade User-DLL UDPWF2Simulink.dll von C:\Winfact\WF2000\BORIS\User-DLLs\UDPSimulink: OK</div>
        <div className="bg-[#0000ff] text-white h-[16px] whitespace-pre">Programm bereit   (27.05.2021 11:08:34)</div>
      </div>
      <ScrollV />
    </div>
    <div className="w-[3px]" />
  </div>
);

const StatusCell = ({ w, t }: { w: string; t: string }) => (
  <div className={`${w} h-full border-l border-[#c4c4c4] pl-[4px] flex items-center whitespace-pre shrink-0`}>{t}</div>
);

const StatusBar = () => (
  <div className="h-[20px] bg-[#f0f0f0] flex items-center text-[11.5px] shrink-0">
    <div className="w-[104px] flex items-center pl-[4px] gap-[2px] shrink-0">
      <Ic s={15}><path d="M1 4h5v9h3M9 8h5M12 8v6h6" fill="none" stroke="#0a1a80" strokeWidth="1.300" /></Ic>
      <Ic s={15}><path d="M2 2h16v16H2z" fill="none" stroke="#888" strokeWidth="1.400" /><rect x="6" y="3" width="8" height="5" fill="none" stroke="#888" /><rect x="6" y="12" width="8" height="6" fill="none" stroke="#888" /></Ic>
      <Ic s={15}><circle cx="10" cy="10" r="8" fill="none" stroke="#888" strokeWidth="1.400" /><path d="M10 5v5H6" fill="none" stroke="#666" strokeWidth="1.400" /></Ic>
      <Hand size={15} color="#888" strokeWidth={1.5} />
      <Ic s={15}><path d="M7 2h6v5h5v6h-5v5H7v-5H2V7h5z" fill="none" stroke="#888" strokeWidth="1.400" /><path d="M2 10h16M10 2v16" stroke="#aaa" /></Ic>
      <Ic s={15}><circle cx="10" cy="10" r="8" fill="none" stroke="#999" strokeWidth="1.400" /><path d="M10 5v6M10 13v2" stroke="#888" strokeWidth="1.400" /></Ic>
    </div>
    <StatusCell w="w-[150px]" t="Blöcke: 6 (6) S / 3 T" />
    <StatusCell w="w-[130px]" t="0 selektiert  0 passiv" />
    <StatusCell w="w-[140px]" t="T = 10  (0.01)  RK" />
    <StatusCell w="w-[90px]" t="(0, 0)" />
    <StatusCell w="flex-1" t="WinFACT 10 (Beta-Version 10.1.1.1023)  (C) Ingenieurbüro Dr. Kahlert 1990, 2021" />
    <Grip className="w-[10px] h-[10px] self-end mb-px" />
  </div>
);

export default function App() {
  return (
    <div className="relative w-[1117px] h-[684px] overflow-hidden">
      <div className="w-full h-full flex flex-col border-x border-b border-[#0078d7] bg-[#f0f0f0] text-black font-['Roboto',sans-serif]">
        <TitleBar />
        <MenuBar />
        <Toolbar1 />
        <Toolbar2 />
        <div className="flex-1 flex min-h-0">
          <LeftPanel />
          <div className="flex-1 flex flex-col min-w-0 border-l border-[#8a8a8a]">
            <div className="flex-1 flex min-h-0">
              <div className="flex-1 flex flex-col min-w-0">
                <div className="flex-1 flex min-h-0">
                  <Canvas />
                  <ScrollV thumb="w-[16px] h-[19px] bg-[#cdcdcd] mt-[7px]" />
                </div>
                <div className="h-[17px] flex items-center bg-[#f0f0f0] shrink-0">
                  <svg width="6" height="9" viewBox="0 0 6 9" className="ml-[6px]"><path d="M5 .5l-4 4 4 4" fill="none" stroke="#555" strokeWidth="1.600" /></svg>
                  <div className="ml-[5px] w-[51px] h-full bg-[#cdcdcd]" />
                  <svg width="6" height="9" viewBox="0 0 6 9" className="ml-auto mr-[21px]"><path d="M1 .5l4 4-4 4" fill="none" stroke="#555" strokeWidth="1.600" /></svg>
                </div>
              </div>
              <Palette />
            </div>
            <TabRow />
          </div>
        </div>
        <Messages />
        <StatusBar />
      </div>
      <div className="absolute left-[898px] top-[579px] w-[211px] h-[37px] border-2 border-[#ff0000]" />
    </div>
  );
}
